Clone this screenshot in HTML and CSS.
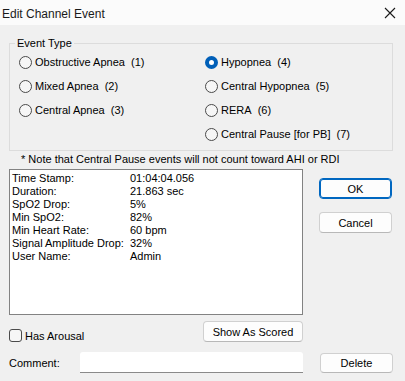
FILE: index.html
```html
<!DOCTYPE html>
<html>
<head>
<meta charset="utf-8">
<link rel="stylesheet" href="styles.css">
</head>
<body>
<div class="window">
  <div class="titlebar">
    <span class="title">Edit Channel Event</span>
    <svg class="close" width="12" height="12" viewBox="0 0 12 12"><path d="M1 1 L11 11 M11 1 L1 11" stroke="#1a1a1a" stroke-width="1.1" fill="none"/></svg>
  </div>
  <div class="content">
    <fieldset class="group">
      <legend>Event Type</legend>
      <div class="radios">
        <div class="col">
          <div class="radio"><span class="dot"></span>Obstructive Apnea&nbsp; (1)</div>
          <div class="radio"><span class="dot"></span>Mixed Apnea&nbsp; (2)</div>
          <div class="radio"><span class="dot"></span>Central Apnea&nbsp; (3)</div>
        </div>
        <div class="col">
          <div class="radio"><span class="dot on"></span>Hypopnea&nbsp; (4)</div>
          <div class="radio"><span class="dot"></span>Central Hypopnea&nbsp; (5)</div>
          <div class="radio"><span class="dot"></span>RERA&nbsp; (6)</div>
          <div class="radio"><span class="dot"></span>Central Pause [for PB]&nbsp; (7)</div>
        </div>
      </div>
    </fieldset>
    <p class="note">* Note that Central Pause events will not count toward AHI or RDI</p>
    <div class="main">
      <div class="list">
        <span>Time Stamp:</span><span>01:04:04.056</span>
        <span>Duration:</span><span>21.863 sec</span>
        <span>SpO2 Drop:</span><span>5%</span>
        <span>Min SpO2:</span><span>82%</span>
        <span>Min Heart Rate:</span><span>60 bpm</span>
        <span>Signal Amplitude Drop:</span><span>32%</span>
        <span>User Name:</span><span>Admin</span>
      </div>
      <div class="side">
        <button class="btn default">OK</button>
        <button class="btn">Cancel</button>
      </div>
    </div>
    <div class="arousal">
      <label class="check"><span class="box"></span>Has Arousal</label>
      <button class="btn wide">Show As Scored</button>
    </div>
    <div class="comment">
      <span class="clabel">Comment:</span>
      <div class="input"></div>
      <button class="btn">Delete</button>
    </div>
  </div>
</div>
</body>
</html>
```
FILE: styles.css
```css
* { box-sizing: border-box; }
html, body { margin: 0; padding: 0; }
body {
  width: 405px;
  height: 381px;
  overflow: hidden;
  background: #f0f0f0;
  font-family: "Liberation Sans", Arial, sans-serif;
  font-size: 11px;
  color: #000;
}
.window { width: 405px; height: 381px; background: #f0f0f0; }
.titlebar {
  height: 25px;
  background: #fbfbfb;
  display: flex;
  align-items: center;
  justify-content: space-between;
  padding: 0 9px 0 2px;
}
.title { font-size: 12px; color: #1a1a1a; padding-top: 2px; }
.close { display: block; }
.content { padding: 0 12px 0 9px; }
.group {
  margin: 12px 0 0 0;
  padding: 0 0 3px 0;
  border: 1px solid #dcdcdc;
  height: 114px;
}
.group legend {
  margin-left: 5px;
  padding: 0 2px;
  line-height: 13px;
}
.radios { display: grid; grid-template-columns: 186px 1fr; padding-left: 9px; }
.col { display: flex; flex-direction: column; }
.radio { height: 24px; display: flex; align-items: center; white-space: nowrap; }
.dot {
  width: 13px; height: 13px;
  border-radius: 50%;
  border: 1px solid #4a4a4a;
  background: #f6f6f6;
  margin-right: 3px;
  flex: none;
}
.dot.on {
  border: 4px solid #005fb8;
  background: #fff;
}
.note { margin: 2px 0 0 12px; line-height: 13px; height: 13px; }
.main {
  margin-top: 3px;
  display: grid;
  grid-template-columns: 294px 73px;
  column-gap: 16px;
}
.list {
  height: 146px;
  background: #fff;
  border: 1px solid #828282;
  padding: 2px 2px;
  display: grid;
  grid-template-columns: 118px 1fr;
  grid-auto-rows: 13px;
  line-height: 13px;
  align-content: start;
}
.side { display: flex; flex-direction: column; gap: 13px; padding-top: 9px; }
.btn {
  font-family: inherit;
  font-size: 11px;
  color: #000;
  height: 21px;
  background: #fdfdfd;
  border: 1px solid #d0d0d0;
  border-bottom-color: #b8b8b8;
  border-radius: 4px;
  padding: 0;
}
.btn.default { border: 1px solid #0067c0; box-shadow: inset 0 0 0 1px #0067c0; }
.arousal {
  margin-top: 6px;
  display: grid;
  grid-template-columns: 194px 100px;
  align-items: start;
}
.check { display: flex; align-items: center; height: 13px; margin-top: 8px; }
.box {
  width: 13px; height: 13px;
  border: 1px solid #4a4a4a;
  border-radius: 3px;
  background: #f6f6f6;
  margin-right: 3px;
}
.btn.wide { height: 21px; }
.comment {
  margin-top: 10px;
  display: grid;
  grid-template-columns: 71px 223px 73px;
  column-gap: 0;
  align-items: center;
}
.comment .btn { margin-left: 17px; height: 20px; width: 73px; }
.input {
  height: 21px;
  background: #fff;
  border-bottom: 1px solid #8a8a8a;
  border-radius: 3px 3px 0 0;
}
```
